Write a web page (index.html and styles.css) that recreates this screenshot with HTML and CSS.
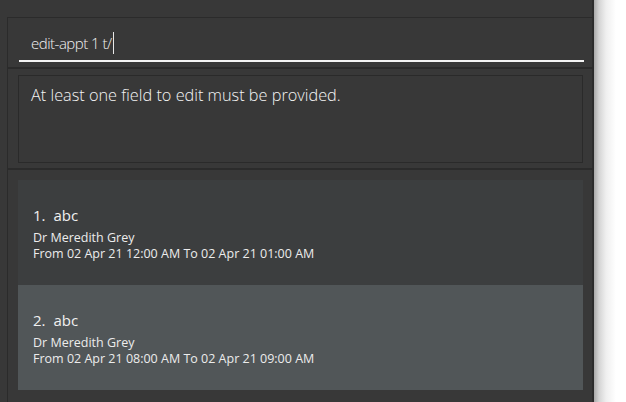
FILE: index.html
```html
<!DOCTYPE html>
<html>
<head>
<meta charset="utf-8">
<link rel="stylesheet" href="styles.css">
</head>
<body>
<div class="page">
  <div class="window">
    <div class="frame">
      <div class="cmd-pane">
        <div class="cmd-field"><span class="cmd-text">edit-appt 1 t/</span><span class="caret"></span></div>
      </div>
      <div class="sep"></div>
      <div class="result-pane">
        <div class="result-box">At least one field to edit must be provided.</div>
      </div>
      <div class="sep"></div>
      <div class="list-pane">
        <div class="card even">
          <div class="title"><span class="idx">1.</span>abc</div>
          <div class="line">Dr Meredith Grey</div>
          <div class="line">From 02 Apr 21 12:00 AM To 02 Apr 21 01:00 AM</div>
        </div>
        <div class="card odd">
          <div class="title"><span class="idx">2.</span>abc</div>
          <div class="line">Dr Meredith Grey</div>
          <div class="line">From 02 Apr 21 08:00 AM To 02 Apr 21 09:00 AM</div>
        </div>
      </div>
    </div>
  </div>
  <div class="shade"></div>
</div>
</body>
</html>
```

FILE: styles.css
```css
html, body {
  margin: 0;
  padding: 0;
  background: #ffffff;
}
body {
  font-family: "Open Sans", "Noto Sans", sans-serif;
  color: #ffffff;
}
.page {
  display: flex;
  width: 626px;
  height: 402px;
  overflow: hidden;
}
.window {
  width: 594px;
  height: 402px;
  box-sizing: border-box;
  background: #383838;
  padding: 17px 0 0 7px;
  border-right: 2px solid #2d2d2d;
  flex: none;
}
.shade {
  flex: 1;
  background: linear-gradient(to right, #a9a9a9 0px, #d4d4d4 5px, #efefef 12px, #ffffff 22px);
}
.frame {
  width: 587px;
  box-sizing: border-box;
  border: 1px solid #2b2b2b;
  border-bottom: none;
  height: 385px;
}
.cmd-pane {
  height: 49px;
  padding: 12px 9px 0 11px;
  box-sizing: border-box;
}
.cmd-field {
  height: 32px;
  border-bottom: 2px solid #f4f4f4;
  display: flex;
  align-items: center;
  padding: 0 0 5px 12px;
  box-sizing: border-box;
}
.cmd-text {
  font-weight: 300;
  font-size: 15px;
  color: #f2f2f2;
  letter-spacing: -0.5px;
}
.caret {
  display: inline-block;
  width: 1px;
  height: 22px;
  background: #e8e8e8;
  margin-left: 1px;
}
.sep {
  height: 2px;
  background: #2b2b2b;
}
.result-pane {
  padding: 6px 10px 5px 10px;
}
.result-box {
  height: 88px;
  box-sizing: border-box;
  border: 1px solid #2a2a2a;
  padding: 8px 12px;
  font-weight: 300;
  font-size: 16.3px;
  line-height: 22px;
  color: #f4f4f4;
}
.list-pane {
  padding: 10px 10px 0 10px;
}
.card {
  height: 105px;
  box-sizing: border-box;
  padding: 24px 15px 0 15px;
}
.card.even {
  background: #3c3e3f;
}
.card.odd {
  background: #515658;
}
.title {
  font-size: 15px;
  font-weight: 500;
  line-height: 22px;
  color: #f0f0f0;
  margin-bottom: 4px;
}
.idx {
  margin-right: 8px;
}
.line {
  font-size: 12.5px;
  line-height: 16px;
  color: #ececec;
}
```
